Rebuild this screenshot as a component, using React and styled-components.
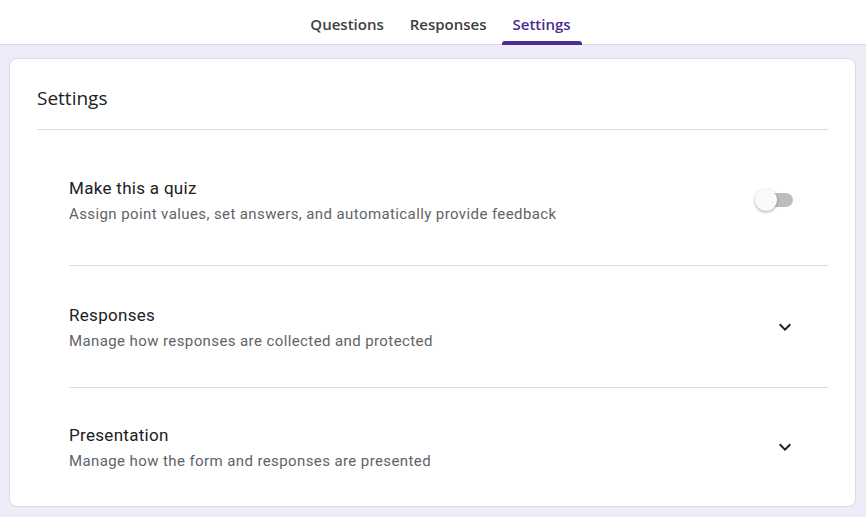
import styled, { createGlobalStyle } from "styled-components";

const GlobalStyle = createGlobalStyle`
  html, body {
    margin: 0;
    padding: 0;
    background: #f0ebf8;
    font-family: Roboto, "Liberation Sans", Arial, sans-serif;
  }
`;

const Page = styled.div`
  width: 866px;
  height: 517px;
  overflow: hidden;
  background: #f0ebf8;
`;

const TopBar = styled.nav`
  height: 44px;
  background: #fff;
  border-bottom: 1px solid #dadce0;
  display: flex;
  justify-content: center;
  align-items: stretch;
  gap: 4px;
  padding-left: 15px;
`;

const Tab = styled.div`
  position: relative;
  display: flex;
  align-items: center;
  padding: 3px 11px 0;
  font-family: "Open Sans", Roboto, sans-serif;
  font-size: 15px;
  font-weight: 600;
  color: ${(p) => (p.$active ? "#4d2c91" : "#3c4043")};

  &::after {
    content: "";
    display: ${(p) => (p.$active ? "block" : "none")};
    position: absolute;
    left: 0;
    right: 0;
    bottom: -1px;
    height: 4px;
    border-radius: 3px 3px 0 0;
    background: #4d2c91;
  }
`;

const Card = styled.section`
  margin: 13px 10px 0 9px;
  background: #fff;
  border: 1px solid #dadce0;
  border-radius: 8px;
  padding: 0 27px 0 27px;
`;

const CardTitle = styled.h2`
  margin: 0;
  padding: 25px 0 17px;
  font-family: "Open Sans", Roboto, sans-serif;
  font-size: 19px;
  line-height: 28px;
  font-weight: 400;
  color: #202124;
  border-bottom: 1px solid #dadce0;
`;

const List = styled.div`
  margin-left: 32px;
  padding-top: 8px;
`;

const Row = styled.div`
  display: flex;
  align-items: center;
  justify-content: space-between;
  padding: ${(p) => p.$pad};
  padding-right: 31px;
  border-bottom: ${(p) => (p.$last ? "none" : "1px solid #dadce0")};
`;

const Texts = styled.div`
  display: flex;
  flex-direction: column;
  gap: 4px;
`;

const RowTitle = styled.div`
  font-size: 17px;
  line-height: 24px;
  letter-spacing: 0.3px;
  color: #202124;
`;

const RowSub = styled.div`
  font-size: 15px;
  line-height: 20px;
  letter-spacing: 0.4px;
  color: #5f6368;
`;

const Switch = styled.div`
  position: relative;
  width: 36px;
  height: 14px;
  margin-right: 4px;
  border-radius: 7px;
  background: #bdbdbd;

  &::before {
    content: "";
    position: absolute;
    left: -2px;
    top: -4px;
    width: 22px;
    height: 22px;
    border-radius: 50%;
    background: #fafafa;
    box-shadow: 0 1px 3px rgba(0, 0, 0, 0.35);
  }
`;

const Chevron = () => (
  <svg width="24" height="24" viewBox="0 0 24 24" fill="#202124">
    <path d="M16.59 8.59L12 13.17 7.41 8.59 6 10l6 6 6-6z" />
  </svg>
);

export default function App() {
  return (
    <Page>
      <GlobalStyle />
      <TopBar>
        <Tab>Questions</Tab>
        <Tab>Responses</Tab>
        <Tab $active>Settings</Tab>
      </TopBar>
      <Card>
        <CardTitle>Settings</CardTitle>
        <List>
          <Row $pad="38px 0 41px">
            <Texts>
              <RowTitle>Make this a quiz</RowTitle>
              <RowSub>
                Assign point values, set answers, and automatically provide feedback
              </RowSub>
            </Texts>
            <Switch />
          </Row>
          <Row $pad="37px 0 36px">
            <Texts>
              <RowTitle>Responses</RowTitle>
              <RowSub>Manage how responses are collected and protected</RowSub>
            </Texts>
            <Chevron />
          </Row>
          <Row $pad="35px 0 35px" $last>
            <Texts>
              <RowTitle>Presentation</RowTitle>
              <RowSub>Manage how the form and responses are presented</RowSub>
            </Texts>
            <Chevron />
          </Row>
        </List>
      </Card>
    </Page>
  );
}
